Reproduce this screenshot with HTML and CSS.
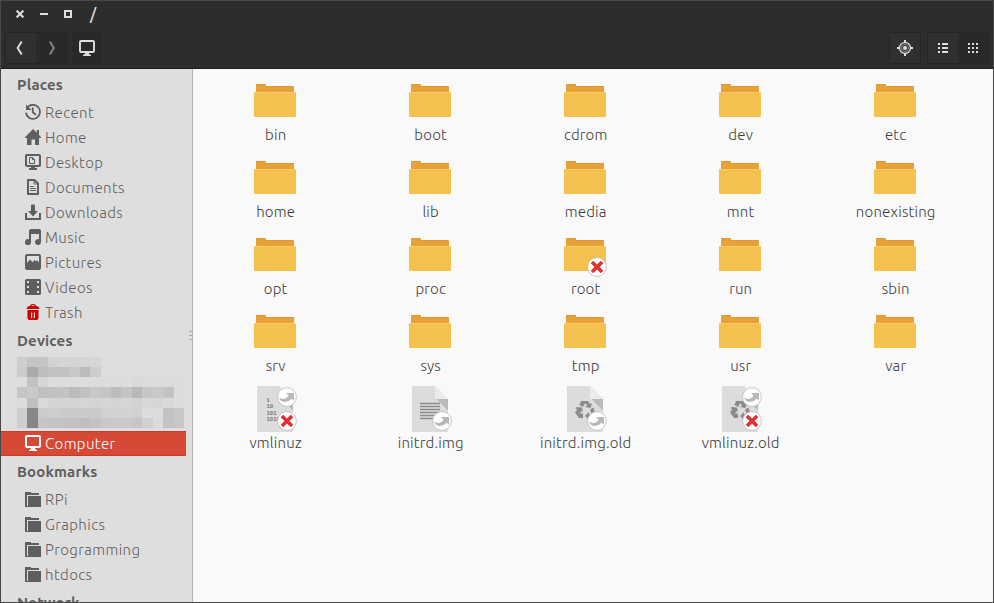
FILE: index.html
```html
<!DOCTYPE html>
<html lang="en">
<head>
  <meta charset="UTF-8" />
  <meta name="viewport" content="width=device-width, initial-scale=1.0"/>
  <title>/</title>
  <link rel="stylesheet" href="styles.css">
</head>
<body>

  <!-- Shared icons -->
  <svg class="sprite" xmlns="http://www.w3.org/2000/svg">
    <symbol id="i-recent" viewBox="0 0 16 16">
      <path d="M2 4.2A7 7 0 1 1 1 8.6" fill="none" stroke="currentColor" stroke-width="1.8"/>
      <path d="M1 .5V6h5.5L4.8 4.3 2.6 2.2z" fill="currentColor"/>
      <path d="M7.8 3.5v4.8l3.2 2.6" fill="none" stroke="currentColor" stroke-width="1.8"/>
    </symbol>
    <symbol id="i-home" viewBox="0 0 16 16">
      <path d="M8 0l3.8 3.8V1H14v5l2 2.2V9h-2v7h-4v-5.5H6.5V16H2V9H0v-.8z" fill="currentColor"/>
    </symbol>
    <symbol id="i-desktop" viewBox="0 0 16 16">
      <rect x="1" y="1" width="14" height="11" rx="1" fill="none" stroke="currentColor" stroke-width="2"/>
      <path d="M6 12h4v2h2v2H4v-2h2z" fill="currentColor"/>
      <path d="M4.500 3.500h3l2 2v4h-5zM7.500 3.500v2h2" fill="none" stroke="currentColor" stroke-width="1"/>
    </symbol>
    <symbol id="i-documents" viewBox="0 0 16 16">
      <path d="M3 1h6.500L13 4.500V15H3z" fill="none" stroke="currentColor" stroke-width="2" stroke-linejoin="round"/>
      <path d="M9 1v4h4M5 7.500h4M5 9.500h6M5 11.500h6" fill="none" stroke="currentColor"/>
    </symbol>
    <symbol id="i-downloads" viewBox="0 0 16 16">
      <path d="M0 9h2v5h12V9h2v7H0z" fill="currentColor"/>
      <path d="M6 1.500Q6 .5 7 .5h2q1 0 1 1V7h3l-5 5.500L3 7h3z" fill="currentColor"/>
    </symbol>
    <symbol id="i-music" viewBox="0 0 16 16">
      <path d="M4 2q0-2 2-2h8q2 0 2 2v11a3 3 0 1 1-2-2.800V5H6v8.200a3 3 0 1 1-2-2.900z" fill="currentColor"/>
    </symbol>
    <symbol id="i-pictures" viewBox="0 0 16 16">
      <path fill-rule="evenodd" d="M2 0h12q2 0 2 2v12q0 2-2 2H2q-2 0-2-2V2Q0 0 2 0zM2 2v7l3-3.500 2.500 2.800L9.500 6l1.500 1.500L12 6l2 2.500V2z" fill="currentColor"/>
    </symbol>
    <symbol id="i-videos" viewBox="0 0 16 16">
      <path fill-rule="evenodd" d="M1.500 0h13Q16 0 16 1.500v13q0 1.500-1.500 1.500h-13Q0 16 0 14.500v-13Q0 0 1.500 0zM2 2v2h2V2zm0 5v2h2V7zm0 5v2h2v-2zM12 2v2h2V2zm0 5v2h2V7zm0 5v2h2v-2z" fill="currentColor"/>
    </symbol>
    <symbol id="i-trash" viewBox="0 0 16 16">
      <path fill-rule="evenodd" d="M5 2q0-2 3-2t3 2q3 0 3.500 3h-13Q2 2 5 2zm1.500 0h3Q9 1 8 1t-1.500 1zM2.500 6h11v8q0 2-2 2h-7q-2 0-2-2zM6 8.500V14h1.200V8.500zm2.800 0V14H10V8.500z" fill="currentColor"/>
    </symbol>
    <symbol id="i-computer" viewBox="0 0 16 16">
      <rect x="1" y="1" width="14" height="11" rx="1" fill="none" stroke="currentColor" stroke-width="1.900"/>
      <path d="M6 12.500h4V14l2 1v1H4v-1l2-1z" fill="currentColor"/>
    </symbol>
    <symbol id="i-folder" viewBox="0 0 16 16">
      <path d="M0 1h6v1h8v2H2v12H0z" fill="currentColor"/>
      <path d="M3 5h13v11H2v-1h1z" fill="currentColor"/>
    </symbol>

    <symbol id="folder" viewBox="0 0 48 48">
      <path d="M5 16V8q0-1 1-1h8q1 0 1 1v1h27q1 0 1 1v6z" fill="#e8a135"/>
      <path d="M5.500 7.500h9M15 9.500h27.500" stroke="#dc9835" fill="none"/>
      <rect x="3" y="15" width="42" height="25" rx="1.200" fill="#f5c14e"/>
      <path d="M4 15.500h40" stroke="#f8cd70"/>
    </symbol>
    <symbol id="paper" viewBox="0 0 48 48">
      <path d="M7 1h22l13 13v32q0 1-1 1H7q-1 0-1-1V2q0-1 1-1z" fill="#dcdcdc"/>
      <path d="M29 1l13 13H29z" fill="#ebebeb"/>
      <path d="M30.500 14H42v11.500z" fill="#b9b9b9"/>
    </symbol>
    <symbol id="recycle" viewBox="0 0 20 20">
      <g fill="#8b8b8b">
        <path d="M6 1h7l2 3 2-1-1.500 5L10 7l2-1.500L10.500 3 8 7 4.500 5z"/>
        <path d="M2 7l5 .5L8 12l-1.500-1-1.500 2.500h3V18H4L0 12.500 2.200 9.500 .5 8z"/>
        <path d="M15 9.500l3.500-2 1.500 5-3 5.500h-3v2l-4-4 4-4v2h2.500z"/>
      </g>
    </symbol>
    <symbol id="e-no" viewBox="0 0 20 20">
      <circle cx="10" cy="10" r="9.400" fill="#fff" stroke="#bebebe" stroke-width=".9"/>
      <path d="M6.200 6.200l7.600 7.600M13.800 6.200l-7.600 7.600" stroke="#df3131" stroke-width="3.600" stroke-linecap="square"/>
    </symbol>
    <symbol id="e-link" viewBox="0 0 20 20">
      <circle cx="10" cy="10" r="9.400" fill="#fff" stroke="#bebebe" stroke-width=".9"/>
      <path d="M9 6h8v8l-2.300-2.300Q11 15.500 7 15 3.500 14.500 2 10.500q3 2 5.800 1.200 2.500-.8 3.700-3.200z" fill="#b8b8b8"/>
    </symbol>
  </svg>

  <div class="window">
    <header class="header">
      <div class="titlebar">
        <svg class="win-btn" viewBox="0 0 8 8"><path d="M.6 .6l6.800 6.800M7.400 .6L.6 7.400" stroke="currentColor" stroke-width="2.100"/></svg>
        <svg class="win-btn" viewBox="0 0 8 8"><path d="M0 4h8" stroke="currentColor" stroke-width="2"/></svg>
        <svg class="win-btn" viewBox="0 0 8 8"><path d="M1 1h6v6H1z" fill="none" stroke="currentColor" stroke-width="2"/></svg>
        <span class="title">/</span>
      </div>

      <div class="toolbar">
        <div class="btn-group">
          <button class="tool"><svg viewBox="0 0 16 16"><path d="M8.700 1.500L4.700 8l4 6.500" fill="none" stroke="currentColor" stroke-width="1.900"/></svg></button>
          <button class="tool dark dim"><svg viewBox="0 0 16 16"><path d="M6.800 1.500l4 6.500-4 6.500" fill="none" stroke="currentColor" stroke-width="1.900"/></svg></button>
        </div>
        <div class="btn-group path">
          <button class="tool dark"><svg viewBox="0 0 16 16"><use href="#i-computer"/></svg></button>
        </div>
        <div class="btn-group locate">
          <button class="tool">
            <svg viewBox="0 0 16 16">
              <circle cx="8" cy="8" r="5.500" fill="none" stroke="#bfbfbf" stroke-width="1.500"/>
              <circle cx="8" cy="8" r="3.500" fill="none" stroke="#888" stroke-width="1"/>
              <circle cx="8" cy="8" r="2" fill="currentColor"/>
              <path d="M8 0v3M8 13v3M0 8h3M13 8h3" stroke="currentColor" stroke-width="2"/>
            </svg>
          </button>
        </div>
        <div class="btn-group">
          <button class="tool"><svg viewBox="0 0 16 16"><path d="M3 4h2M7 4h6M3 8h2M7 8h6M3 12h2M7 12h6" stroke="currentColor" stroke-width="2"/></svg></button>
          <button class="tool dark"><svg viewBox="0 0 16 16"><path d="M3 4h2M7 4h2M11 4h2M3 8h2M7 8h2M11 8h2M3 12h2M7 12h2M11 12h2" stroke="currentColor" stroke-width="2"/></svg></button>
        </div>
      </div>
    </header>

    <div class="main">
      <nav class="sidebar">
        <h2>Places</h2>
        <a class="row"><svg><use href="#i-recent"/></svg>Recent</a>
        <a class="row"><svg><use href="#i-home"/></svg>Home</a>
        <a class="row"><svg><use href="#i-desktop"/></svg>Desktop</a>
        <a class="row"><svg><use href="#i-documents"/></svg>Documents</a>
        <a class="row"><svg><use href="#i-downloads"/></svg>Downloads</a>
        <a class="row"><svg><use href="#i-music"/></svg>Music</a>
        <a class="row"><svg><use href="#i-pictures"/></svg>Pictures</a>
        <a class="row"><svg><use href="#i-videos"/></svg>Videos</a>
        <a class="row"><svg class="red"><use href="#i-trash"/></svg>Trash</a>
        <h2>Devices</h2>
        <div class="mosaic" id="mosaic"></div>
        <a class="row active"><svg><use href="#i-computer"/></svg>Computer</a>
        <h2>Bookmarks</h2>
        <a class="row"><svg><use href="#i-folder"/></svg>RPi</a>
        <a class="row"><svg><use href="#i-folder"/></svg>Graphics</a>
        <a class="row"><svg><use href="#i-folder"/></svg>Programming</a>
        <a class="row"><svg><use href="#i-folder"/></svg>htdocs</a>
        <h2>Network</h2>
        <div class="grip"></div>
      </nav>

      <main class="files" id="files"></main>
    </div>
  </div>

  <script>
    const lines = '<path d="M14 18.500h20M14 21.500h20M14 24.500h20M14 27.500h20M14 30.500h20M14 33.500h20" stroke="#8b8b8b" stroke-width="1.400"/>';
    const bits = '<g class="bits"><text x="15.500" y="16.500">1</text><text x="15.500" y="22.500">10</text><text x="15.500" y="29.500">101</text><text x="15.500" y="35.800">1010</text></g>';
    const recycle = '<use href="#recycle" x="14" y="15" width="20" height="20"/>';
    const paper = '<use href="#paper"/>';
    const linkTop = '<use href="#e-link" x="26" y="2" width="20" height="20"/>';
    const linkLow = '<use href="#e-link" x="26" y="26" width="20" height="20"/>';
    const noEntry = '<use href="#e-no" x="26" y="26" width="20" height="20"/>';
    const folder = '<use href="#folder"/>';

    const names = ["bin", "boot", "cdrom", "dev", "etc", "home", "lib", "media", "mnt", "nonexisting",
      "opt", "proc", "root", "run", "sbin", "srv", "sys", "tmp", "usr", "var"];
    const files = names.map((n) => [n, n === "root" ? folder + noEntry : folder]);
    files.push(["vmlinuz", paper + bits + linkTop + noEntry]);
    files.push(["initrd.img", paper + lines + linkLow]);
    files.push(["initrd.img.old", paper + recycle + linkLow]);
    files.push(["vmlinuz.old", paper + recycle + linkTop + noEntry]);

    document.getElementById("files").innerHTML = files.map(([name, art]) =>
      `<div class="file"><svg viewBox="0 0 48 48">${art}</svg><span>${name}</span></div>`
    ).join("");

    // Pixelated device names, one grey level per cell
    const cells = [
      "cd c4 c4 d2 d5 d3 d5 d6 dd dd dd dd dd dd dd dd",
      "cc aa bd c2 c2 c7 bb cd dd dd dd dd dd dd dd dd",
      "dd c2 d6 dc dc dc dc dc dc dc dc da dc dc dc dc",
      "c5 c9 bf c1 c3 bb c1 c8 c5 bd c4 b9 c6 c9 c3 dc",
      "dc c0 d9 d4 d4 d4 d5 d4 d6 d4 d6 d3 d7 d5 d9 dc",
      "cf 88 cb ce cb ca ca c9 d1 d2 d2 d0 dc dc c2 c8",
      "cd 86 c5 c3 c3 c2 be c3 c8 ca ca c5 d0 db c3 c7"
    ];
    document.getElementById("mosaic").innerHTML = cells.join(" ").split(" ").map((c) =>
      `<i style="background:#${c + c + c}"></i>`
    ).join("");
  </script>
</body>
</html>
```

FILE: styles.css
```css
* {
  box-sizing: border-box;
}

body {
  margin: 0;
  height: 100vh;
  overflow: hidden;
  font-family: Ubuntu, 'Open Sans', 'Noto Sans', sans-serif;
  font-weight: 300;
  font-size: 15px;
  background: #2d2d2d;
}

.sprite {
  position: absolute;
  width: 0;
  height: 0;
}

.window {
  height: 603px;
  border: 1px solid #484848;
  display: flex;
  flex-direction: column;
}

/* Header */
.header {
  height: 68px;
  flex: none;
  background: #2d2d2d;
  border-bottom: 1px solid #1f1f1f;
  color: #dedede;
}

.titlebar {
  display: flex;
  align-items: center;
  gap: 16px;
  height: 26px;
  padding-left: 15px;
}

.win-btn {
  width: 8px;
  height: 8px;
}

.title {
  font-size: 16px;
  font-weight: 500;
  line-height: 26px;
  margin-left: 2px;
}

.toolbar {
  display: flex;
  padding: 5px 4px 0;
  gap: 6px;
}

.btn-group {
  display: flex;
  height: 32px;
  border: 1px solid #252525;
  border-radius: 2px;
}

.tool {
  display: flex;
  align-items: center;
  justify-content: center;
  width: 30px;
  padding: 0;
  border: none;
  background: #303030;
  color: #dedede;
}

.tool svg {
  width: 16px;
  height: 16px;
}

.dark {
  background: #292929;
}

.dim {
  color: #858585;
}

.path .tool {
  width: 26px;
}

.locate {
  margin-left: auto;
}

/* Sidebar */
.main {
  display: flex;
  flex: 1;
  min-height: 0;
}

.sidebar {
  position: relative;
  width: 192px;
  flex: none;
  overflow: hidden;
  background: #dedede;
  border-right: 1px solid #b2b2b2;
  color: #5e5e5e;
}

.sidebar h2 {
  margin: 0;
  padding-left: 16px;
  height: 31px;
  font-size: 15px;
  font-weight: 700;
  line-height: 31px;
  letter-spacing: 0.15px;
}

.row {
  display: flex;
  gap: 4px;
  width: 185px;
  height: 25px;
  padding-left: 24px;
  line-height: 25px;
  letter-spacing: 0.4px;
}

.row svg {
  width: 16px;
  height: 16px;
  margin-top: 4px;
}

.red {
  color: #cc0000;
}

.active {
  color: #fff;
  background: #d64937;
  border: solid #c23d2d;
  border-width: 1px 0;
  line-height: 23px;
}

.active svg {
  margin-top: 3px;
}

.mosaic {
  display: grid;
  grid-template-columns: repeat(16, 1fr);
  grid-template-rows: repeat(7, 1fr);
  width: 167px;
  height: 71px;
  margin: 1px 0 3px 16px;
}

.grip {
  position: absolute;
  top: 262px;
  right: 0;
  width: 3px;
  height: 11px;
  background: repeating-linear-gradient(#a8a8a8 0 1px, transparent 1px 4px);
}

/* File grid */
.files {
  flex: 1;
  display: grid;
  grid-template-columns: repeat(5, 155px);
  grid-auto-rows: 77px;
  align-content: start;
  padding: 8px 0 0 4.5px;
  background: #f9f9f9;
  color: #3c3c3c;
}

.file {
  display: flex;
  flex-direction: column;
  align-items: center;
}

.file svg {
  width: 48px;
  height: 48px;
}

.file span {
  line-height: 20px;
  letter-spacing: 0.2px;
  padding-left: 1.4px;
}

.bits {
  font: 700 6px 'Liberation Sans', sans-serif;
  fill: #777;
}
```
